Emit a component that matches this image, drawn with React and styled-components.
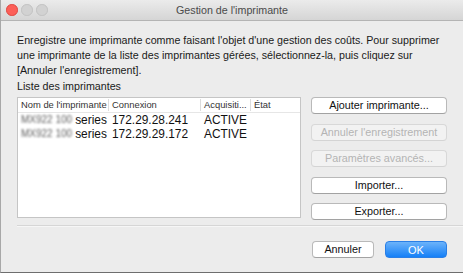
import React from "react";
import styled, { createGlobalStyle } from "styled-components";

const Global = createGlobalStyle`
  html, body { margin: 0; padding: 0; background: #ececec; }
  body { font-family: "Liberation Sans", Arial, sans-serif; }
`;

const Window = styled.div`
  width: 463px;
  height: 273px;
  box-sizing: border-box;
  border-left: 1px solid #a8a8a8;
  border-bottom: 1px solid #6e6e6e;
  background: #ececec;
  display: flex;
  flex-direction: column;
  overflow: hidden;
`;

const TitleBar = styled.div`
  height: 21px;
  flex: none;
  box-sizing: border-box;
  background: linear-gradient(#ebebeb, #d5d5d5);
  border-bottom: 1px solid #b4b4b4;
  display: flex;
  align-items: center;
  position: relative;
  padding-left: 5px;
`;

const Lights = styled.div`
  display: flex;
  gap: 3.5px;
`;

const Light = styled.span`
  width: 11.5px;
  height: 11.5px;
  border-radius: 50%;
  box-sizing: border-box;
  background: ${(p) => (p.$red ? "#fc5f58" : "#d2d2d2")};
  border: 1px solid ${(p) => (p.$red ? "#e0443e" : "#c2c2c2")};
`;

const Title = styled.div`
  position: absolute;
  left: 0;
  right: 0;
  text-align: center;
  font-size: 10.7px;
  color: #4a4a4a;
`;

const Body = styled.div`
  flex: 1;
  display: flex;
  flex-direction: column;
  padding: 12px 16px 0 16px;
`;

const Desc = styled.p`
  margin: 0;
  font-size: 10.7px;
  line-height: 15px;
  color: #1a1a1a;
`;

const Label = styled.div`
  margin-top: 1px;
  font-size: 10.7px;
  line-height: 14px;
  color: #1a1a1a;
`;

const MainRow = styled.div`
  display: flex;
  margin-top: 4px;
  align-items: flex-start;
`;

const Table = styled.div`
  width: 286px;
  height: 121px;
  box-sizing: border-box;
  background: #fff;
  border: 1px solid #c5c5c5;
  display: flex;
  flex-direction: column;
`;

const Grid = styled.div`
  display: grid;
  grid-template-columns: 91px 92px 50px 1fr;
  height: 14px;
`;

const HeaderRow = styled(Grid)`
  border-bottom: 1px solid #e6e6e6;
`;

const HeadCell = styled.div`
  font-size: 9.4px;
  color: #333;
  padding-left: 3px;
  white-space: nowrap;
  overflow: hidden;
  border-right: ${(p) => (p.$last ? "none" : "1px solid #dcdcdc")};
  margin: 1px 0;
  line-height: 12px;
`;

const Cell = styled.div`
  font-size: 11.9px;
  line-height: 14px;
  color: #111;
  padding-left: 3px;
  white-space: nowrap;
  display: flex;
  align-items: center;
`;

const Blur = styled.span`
  display: inline-block;
  flex: none;
  filter: blur(1.3px);
  color: #5e5e5e;
  font-size: 10px;
  margin-right: 3px;
`;

const ButtonCol = styled.div`
  margin-left: 10px;
  display: flex;
  flex-direction: column;
  gap: 9.5px;
`;

const Btn = styled.button`
  width: ${(p) => p.$w || 136}px;
  height: 17px;
  box-sizing: border-box;
  border-radius: 4px;
  font-family: "Liberation Sans", Arial, sans-serif;
  font-size: 10.8px;
  line-height: 15px;
  padding: 0;
  color: ${(p) => (p.$disabled ? "#b4b4b4" : "#111")};
  background: ${(p) => (p.$disabled ? "#f2f2f2" : "#fff")};
  border: 1px solid ${(p) => (p.$disabled ? "#d8d8d8" : "#b9b9b9")};
  border-bottom-color: ${(p) => (p.$disabled ? "#d4d4d4" : "#a2a2a2")};
`;

const Separator = styled.div`
  height: 1px;
  background: #d6d6d6;
  border-bottom: 1px solid #f6f6f6;
  margin: 5px -16px 0 0;
`;

const Footer = styled.div`
  display: flex;
  justify-content: flex-end;
  gap: 11px;
  margin-top: 14px;
`;

const OkBtn = styled.button`
  width: 62px;
  height: 17px;
  box-sizing: border-box;
  border-radius: 4px;
  font-family: "Liberation Sans", Arial, sans-serif;
  font-size: 11px;
  padding: 0;
  color: #fff;
  background: linear-gradient(#6cb3fa, #1580f7);
  border: 1px solid #2a7fe6;
`;

const rows = [
  ["172.29.28.241", "ACTIVE"],
  ["172.29.29.172", "ACTIVE"],
];

export default function App() {
  return (
    <>
      <Global />
      <Window>
        <TitleBar>
          <Lights>
            <Light $red />
            <Light />
            <Light />
          </Lights>
          <Title>Gestion de l'imprimante</Title>
        </TitleBar>
        <Body>
          <Desc>
            Enregistre une imprimante comme faisant l'objet d'une gestion des coûts. Pour supprimer
            une imprimante de la liste des imprimantes gérées, sélectionnez-la, puis cliquez sur
            [Annuler l'enregistrement].
          </Desc>
          <Label>Liste des imprimantes</Label>
          <MainRow>
            <Table>
              <HeaderRow>
                <HeadCell>Nom de l'imprimante</HeadCell>
                <HeadCell>Connexion</HeadCell>
                <HeadCell>Acquisiti...</HeadCell>
                <HeadCell $last>État</HeadCell>
              </HeaderRow>
              {rows.map((r, i) => (
                <Grid key={i}>
                  <Cell>
                    <Blur>MX922 100</Blur>series
                  </Cell>
                  <Cell>{r[0]}</Cell>
                  <Cell>{r[1]}</Cell>
                  <Cell />
                </Grid>
              ))}
            </Table>
            <ButtonCol>
              <Btn>Ajouter imprimante...</Btn>
              <Btn $disabled>Annuler l'enregistrement</Btn>
              <Btn $disabled>Paramètres avancés...</Btn>
              <Btn>Importer...</Btn>
              <Btn>Exporter...</Btn>
            </ButtonCol>
          </MainRow>
          <Separator />
          <Footer>
            <Btn $w={62}>Annuler</Btn>
            <OkBtn>OK</OkBtn>
          </Footer>
        </Body>
      </Window>
    </>
  );
}
